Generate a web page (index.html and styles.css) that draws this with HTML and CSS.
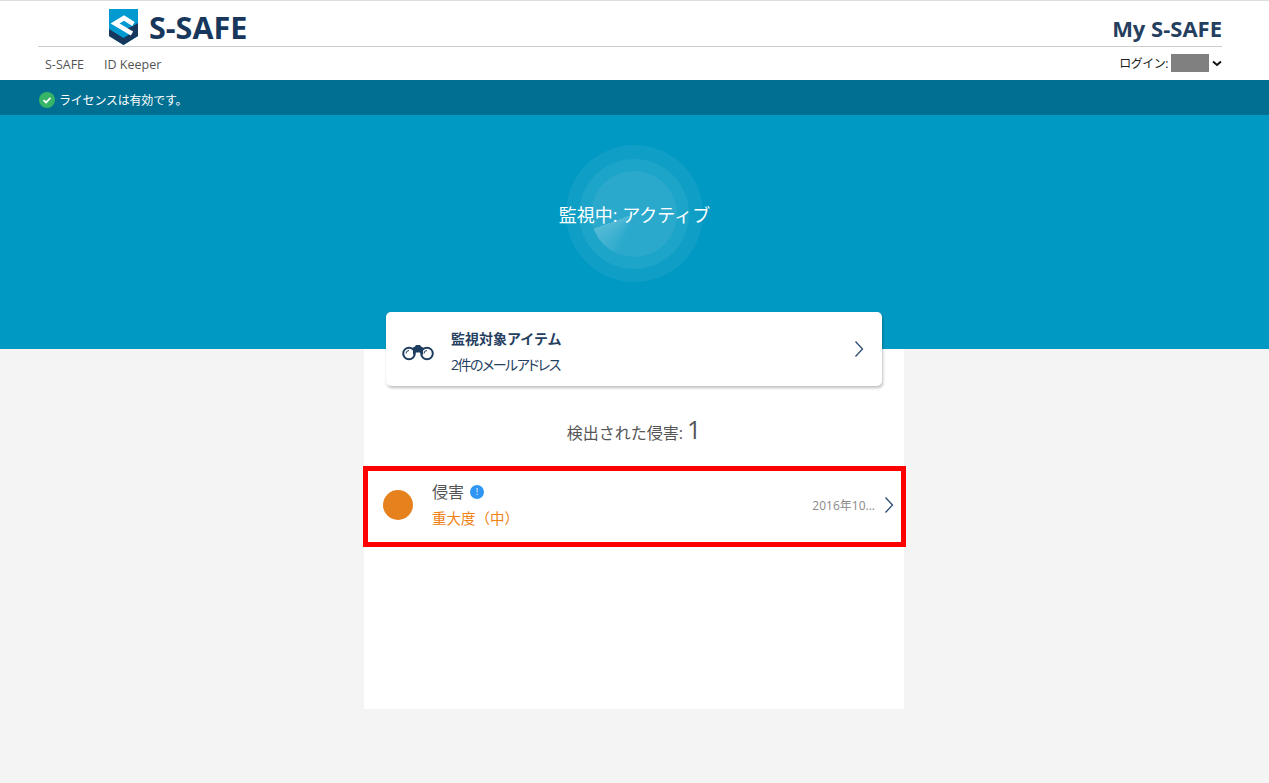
FILE: index.html
```html
<!DOCTYPE html>
<html lang="ja">
  <head>
    <meta charset="UTF-8" />
    <meta name="viewport" content="width=device-width, initial-scale=1.0" />
    <title>My S-SAFE</title>
    <link rel="stylesheet" href="styles.css">
  </head>

  <body>
    <header class="site-header">
      <div class="header-top">
        <div class="logo">
          <svg class="logo-mark" width="29" height="36" viewBox="0 0 29 36">
            <path fill="#0099d0" d="M0 0H29V27L14.500 36 0 27z"/>
            <path fill="#17385c" d="M22 18L29 14V27L14.500 36 0 27V20L14.500 29 21 25 14 20.500z"/>
            <path d="M24.500 15L15 9 6 14.500 23 24.500" fill="none" stroke="#fff" stroke-width="4.500"/>
          </svg>
          <span class="logo-text">S-SAFE</span>
        </div>
        <div class="product-name">My S-SAFE</div>
      </div>
      <div class="header-nav">
        <nav class="nav-links">
          <a class="nav-link">S-SAFE</a>
          <a class="nav-link">ID Keeper</a>
        </nav>
        <div class="login">
          <span>ログイン:</span>
          <span class="login-mask"></span>
          <svg class="login-caret" width="10" height="7" viewBox="0 0 10 7">
            <path d="M1 1.500L5 5 9 1.500" fill="none" stroke="#111" stroke-width="2"/>
          </svg>
        </div>
      </div>
    </header>

    <div class="license-bar">
      <svg width="16" height="16" viewBox="0 0 16 16">
        <circle cx="8" cy="8" r="8" fill="#35b565"/>
        <path d="M4.500 8.200L7 10.500 11.500 5.800" fill="none" stroke="#fff" stroke-width="1.700"/>
      </svg>
      <span>ライセンスは有効です。</span>
    </div>

    <section class="hero">
      <div class="radar">
        <div class="radar-ring ring-outer">
          <div class="radar-ring ring-middle">
            <div class="radar-ring ring-inner">
              <div class="radar-sweep"></div>
            </div>
          </div>
        </div>
        <div class="radar-label">監視中: アクティブ</div>
      </div>
    </section>

    <main class="content">
      <div class="panel">
        <div class="watch-card">
          <svg class="binoculars" width="32" height="18" viewBox="0 0 32 18">
            <circle cx="7" cy="10.500" r="5.800" fill="#fff" stroke="#1f3d60" stroke-width="2"/>
            <circle cx="25" cy="10.500" r="5.800" fill="#fff" stroke="#1f3d60" stroke-width="2"/>
            <path d="M4 10.500A3 3 0 0 1 7 7.500M22 10.500A3 3 0 0 1 25 7.500" fill="none" stroke="#1f3d60"/>
            <path fill="#1f3d60" d="M10 5L13 3.500 14 2H18L19 3.500 22 5 21 7V12L18 9.500H14L11 12V7z"/>
          </svg>
          <div class="watch-text">
            <div class="watch-title">監視対象アイテム</div>
            <div class="watch-sub">2件のメールアドレス</div>
          </div>
          <svg class="chevron" width="10" height="18" viewBox="0 0 10 18">
            <path d="M1.500 1.500L8.500 9 1.500 16.500" fill="none" stroke="#2c4a70" stroke-width="1.300"/>
          </svg>
        </div>

        <h2 class="found">検出された侵害: <span class="found-count">1</span></h2>

        <div class="breach-row">
          <span class="severity-dot"></span>
          <div class="breach-text">
            <div class="breach-title">
              <span>侵害</span>
              <span class="info-badge">!</span>
            </div>
            <div class="breach-severity">重大度（中）</div>
          </div>
          <span class="breach-date">2016年10...</span>
          <svg class="chevron" width="10" height="18" viewBox="0 0 10 18">
            <path d="M1.500 1.500L8.500 9 1.500 16.500" fill="none" stroke="#2c4a70" stroke-width="1.300"/>
          </svg>
        </div>
      </div>
    </main>
  </body>
</html>
```

FILE: styles.css
```css
* {
  box-sizing: border-box;
}

html,
body {
  margin: 0;
  padding: 0;
  height: 100%;
}

body {
  font-family: "Open Sans", "Noto Sans CJK JP", sans-serif;
  background-color: #f4f4f4;
  display: flex;
  flex-direction: column;
  overflow: hidden;
}

.site-header {
  background: white;
  border-top: 1px solid #dedee0;
  height: 80px;
  padding: 0 47px 0 38px;
}

.header-top {
  height: 46px;
  border-bottom: 1px solid #cccccc;
  display: flex;
  justify-content: space-between;
  align-items: flex-end;
}

.logo {
  display: flex;
  align-items: center;
  gap: 11px;
  margin-left: 71px;
  margin-bottom: 1px;
}

.logo-mark {
  display: block;
}

.logo-text {
  font-size: 30.500px;
  font-weight: 700;
  line-height: 36px;
  color: #17385c;
  margin-top: 1px;
}

.product-name {
  font-size: 22px;
  font-weight: 700;
  line-height: 30px;
  color: #25405f;
  margin-bottom: 3px;
}

.header-nav {
  display: flex;
  justify-content: space-between;
  align-items: center;
  height: 33px;
  padding-top: 1px;
}

.nav-links {
  display: flex;
  gap: 20px;
  padding-left: 7px;
  font-size: 12.500px;
  color: #555555;
}

.login {
  display: flex;
  align-items: center;
  font-size: 12px;
  color: #222222;
  margin-top: -3px;
  letter-spacing: -0.500px;
}

.login-mask {
  width: 38px;
  height: 18px;
  background: #808080;
  margin-left: 3px;
  margin-right: 3px;
}

.login-caret {
  margin-top: 2px;
}

.license-bar {
  height: 35px;
  background-color: #006f92;
  color: white;
  font-size: 12px;
  letter-spacing: -0.200px;
  display: flex;
  align-items: center;
  gap: 4px;
  padding: 5px 0 0 39px;
}

.hero {
  height: 234px;
  background-color: #0099c3;
  display: flex;
  justify-content: center;
}

.radar {
  position: relative;
  width: 138px;
  height: 138px;
  margin-top: 30px;
}

.radar-ring {
  border-radius: 50%;
  background: rgba(255, 255, 255, 0.06);
  display: flex;
  align-items: center;
  justify-content: center;
}

.ring-outer {
  width: 137px;
  height: 137px;
}

.ring-middle {
  width: 110px;
  height: 110px;
}

.ring-inner {
  width: 86px;
  height: 86px;
  position: relative;
  overflow: hidden;
}

.radar-sweep {
  position: absolute;
  left: 0;
  top: 0;
  width: 86px;
  height: 86px;
  background: conic-gradient(from 200deg, rgba(255, 255, 255, 0) 0deg, rgba(255, 255, 255, 0.2) 50deg, rgba(255, 255, 255, 0) 50deg);
}

.radar-label {
  position: absolute;
  left: -40px;
  right: -40px;
  top: 56px;
  text-align: center;
  font-size: 18px;
  line-height: 28px;
  color: white;
  white-space: nowrap;
}

.content {
  flex: 1;
  display: flex;
  justify-content: center;
  padding-right: 1px;
}

.panel {
  position: relative;
  width: 540px;
  height: 360px;
  background: white;
}

.watch-card {
  width: 496px;
  height: 74px;
  margin: -37px 0 0 22px;
  background: white;
  border-radius: 5px;
  box-shadow: 1px 2px 3px rgba(0, 0, 0, 0.25);
  display: flex;
  align-items: center;
  padding: 0 18px 0 16px;
  position: relative;
}

.binoculars {
  display: block;
  margin-right: 17px;
  margin-top: 6px;
}

.watch-text {
  flex: 1;
  padding-top: 6px;
}

.watch-title {
  font-size: 14px;
  font-weight: 700;
  line-height: 20px;
  color: #25405f;
}

.watch-sub {
  font-size: 14px;
  line-height: 20px;
  margin-top: 6px;
  color: #25405f;
  font-feature-settings: "palt";
  letter-spacing: -1.500px;
}

.found {
  margin: 28px 0 0 0;
  height: 30px;
  text-align: center;
  font-size: 16px;
  font-weight: 400;
  line-height: 30px;
  color: #555555;
}

.found-count {
  font-size: 25px;
}

.breach-row {
  position: relative;
  width: 543px;
  height: 81px;
  margin: 22px 0 0 -1px;
  border: 5px solid #ff0000;
  display: flex;
  align-items: center;
  padding: 0 7px 4px 15px;
}

.severity-dot {
  width: 30px;
  height: 30px;
  border-radius: 50%;
  background: #e6821e;
  margin-right: 19px;
}

.breach-text {
  flex: 1;
  padding-top: 2px;
}

.breach-title {
  display: flex;
  align-items: center;
  gap: 6px;
  font-size: 16px;
  line-height: 20px;
  color: #555555;
}

.info-badge {
  width: 14px;
  height: 14px;
  border-radius: 50%;
  background: #2f96f3;
  color: white;
  font-size: 9px;
  line-height: 14px;
  text-align: center;
}

.breach-severity {
  font-size: 14.500px;
  line-height: 20px;
  margin-top: 7px;
  color: #ef8012;
}

.breach-date {
  font-size: 12px;
  color: #8a8a8a;
  margin-right: 9px;
}
```
